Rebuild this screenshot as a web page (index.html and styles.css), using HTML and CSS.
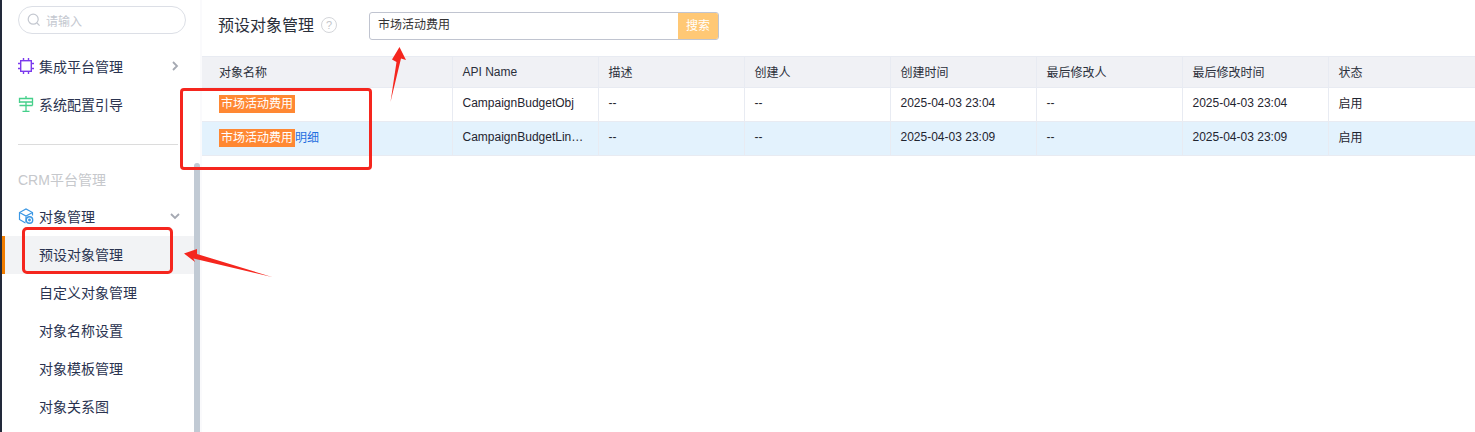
FILE: index.html
```html
<!DOCTYPE html>
<html lang="zh-CN">
<head>
<meta charset="utf-8">
<title>预设对象管理</title>
<link rel="stylesheet" href="styles.css">
</head>
<body>
<div class="page">
  <div class="rail"></div>
  <aside class="sidebar">
    <div class="search">
      <svg class="search-icon" viewBox="0 0 14 14"><circle cx="6.2" cy="6.2" r="5" /><path d="M10 10l2.6 2.6" /></svg>
      <span>请输入</span>
    </div>
    <div class="nav first">
      <svg class="icon" viewBox="0 0 16 16" fill="none" stroke="#7c3aed" stroke-width="1.4"><rect x="2.700" y="2.700" width="10.600" height="10.600"/><path d="M5.500 0v2.500M10.500 0v2.500M5.500 13.500v2.500M10.500 13.500v2.500M0 5.500h2.500M0 10.500h2.500M13.500 5.500h2.500M13.500 10.500h2.500"/></svg>
      <span class="label">集成平台管理</span>
      <svg class="chev" viewBox="0 0 10 10"><path d="M3 1l4 4-4 4"/></svg>
    </div>
    <div class="nav">
      <svg class="icon" viewBox="0 0 16 16" fill="none" stroke="#45d08a" stroke-width="1.3"><path d="M8 0v2.500M1.500 2.500h13v3.500H1.500zM14.500 6v3.500M1.500 6v1M1.500 9.500h13M8 6v10M4.500 15.500h7"/></svg>
      <span class="label">系统配置引导</span>
    </div>
    <div class="divider"></div>
    <div class="group">CRM平台管理</div>
    <div class="nav">
      <svg class="icon" viewBox="0 0 16 16" fill="none" stroke="#3a97e4" stroke-width="1.200"><path d="M14.500 7.500V4.500L8 1 1.500 4.500v7L7.500 15M1.500 4.500L8 8l6.500-3.500M8 8v6"/><circle cx="11.500" cy="12" r="3.200" stroke-width="1.400"/><circle cx="11.500" cy="12" r=".8" fill="#3a97e4"/></svg>
      <span class="label">对象管理</span>
      <svg class="chev" viewBox="0 0 10 10"><path d="M1 3l4 4 4-4"/></svg>
    </div>
    <div class="nav sub active"><span class="label">预设对象管理</span></div>
    <div class="nav sub"><span class="label">自定义对象管理</span></div>
    <div class="nav sub"><span class="label">对象名称设置</span></div>
    <div class="nav sub"><span class="label">对象模板管理</span></div>
    <div class="nav sub"><span class="label">对象关系图</span></div>
  </aside>
  <div class="track"><div class="thumb"></div></div>
  <main class="main">
    <header class="head">
      <h1 class="title">预设对象管理</h1>
      <span class="help">?</span>
      <div class="query">
        <span class="query-text">市场活动费用</span>
        <span class="query-btn">搜索</span>
      </div>
    </header>
    <table class="grid">
      <colgroup>
        <col class="c1"><col class="c2"><col class="c2"><col class="c2"><col class="c2"><col class="c2"><col class="c2"><col>
      </colgroup>
      <thead>
        <tr><th>对象名称</th><th>API Name</th><th>描述</th><th>创建人</th><th>创建时间</th><th>最后修改人</th><th>最后修改时间</th><th>状态</th></tr>
      </thead>
      <tbody>
        <tr>
          <td><mark class="hit">市场活动费用</mark></td>
          <td>CampaignBudgetObj</td><td>--</td><td>--</td><td>2025-04-03 23:04</td><td>--</td><td>2025-04-03 23:04</td><td>启用</td>
        </tr>
        <tr class="hover">
          <td><mark class="hit">市场活动费用</mark><span class="link">明细</span></td>
          <td>CampaignBudgetLin…</td><td>--</td><td>--</td><td>2025-04-03 23:09</td><td>--</td><td>2025-04-03 23:09</td><td>启用</td>
        </tr>
      </tbody>
    </table>
  </main>
</div>
<div class="box box-rows"></div>
<div class="box box-nav"></div>
<svg class="arrows" viewBox="0 0 1475 432">
  <path d="M390.500 102L396.500 62 392 59.500 399.500 47 406 60 401 58.500Z"/>
  <path d="M272 277L197 254 197 249 184 253.500 195 262 193.500 258.500Z"/>
</svg>
</body>
</html>
```
FILE: styles.css
```css
* { box-sizing: border-box; }
html, body { margin: 0; height: 100%; overflow: hidden; background: #fff; }
body {
  position: relative;
  font-family: "Liberation Sans", "Noto Sans CJK SC", sans-serif;
  font-size: 12px;
  color: #181f2e;
}
.page { display: flex; height: 432px; }
.rail { width: 2px; background: #22293a; flex: none; }
.sidebar { width: 192px; flex: none; padding-top: 6px; }
.search {
  margin-left: 16px;
  width: 168px;
  height: 28px;
  border: 1px solid #dcdfe6;
  border-radius: 14px;
  display: flex;
  align-items: center;
  padding-left: 8px;
  gap: 5px;
  color: #c4c8d0;
  font-size: 12px;
}
.search-icon { width: 14px; height: 14px; fill: none; stroke: #c4c8d0; stroke-width: 1.200; }
.nav {
  height: 38px;
  display: flex;
  align-items: center;
  padding: 0 14px 2px 16px;
  font-size: 14px;
  color: #2a3350;
}
.first { margin-top: 14px; }
.icon { width: 16px; height: 16px; margin-right: 5px; flex: none; }
.label { flex: 1; }
.chev { width: 10px; height: 10px; fill: none; stroke: #a5a9b2; stroke-width: 1.800; flex: none; }
.divider { height: 1px; background: #dcdcdc; margin: 20px 16px 0 16px; }
.group { height: 35px; margin-top: 18px; padding-left: 16px; line-height: 35px; font-size: 14px; color: #c6c8cc; }
.sub { padding-left: 37px; }
.active { background: #f2f3f5; border-left: 3px solid #f07c00; padding-left: 34px; }
.track { width: 8px; flex: none; padding-top: 163px; border-right: 2px solid #fafafc; }
.thumb { height: 100%; background: #c1cad4; border-radius: 3px 3px 0 0; }
.main { flex: 1; min-width: 0; }
.head { height: 56px; display: flex; align-items: center; padding-left: 16px; padding-bottom: 8px; }
.title { margin: 0; font-size: 16px; font-weight: 400; color: #2a2f3a; }
.help {
  width: 16px; height: 16px; margin: 2px 0 0 7px;
  border: 1px solid #d4d6da; border-radius: 50%;
  color: #c4c6ca; font-size: 11px; line-height: 14px; text-align: center;
}
.query {
  margin-left: 32px;
  margin-top: 4px;
  width: 350px;
  height: 28px;
  border: 1px solid #c0c4d0;
  border-radius: 3px;
  display: flex;
  align-items: stretch;
}
.query-text { flex: 1; padding-left: 8px; line-height: 25px; color: #333; }
.query-btn { width: 40px; background: #ffc875; color: #fff; text-align: center; line-height: 26px; border-radius: 0 2px 2px 0; }
.grid { width: 1273px; border-collapse: collapse; table-layout: fixed; }
.c1 { width: 250px; }
.c2 { width: 146px; }
.grid th, .grid td {
  border: 1px solid #e8ebf2;
  padding: 0 15px 0 10px;
  text-align: left;
  font-weight: 400;
  white-space: nowrap;
}
.grid th:first-child, .grid td:first-child { border-left: 0; padding-left: 17px; }
.grid th:last-child, .grid td:last-child { border-right: 0; }
.grid th { height: 31px; background: #f0f1f5; color: #2a2f3a; padding-bottom: 1px; }
.grid td { height: 34px; color: #1f2530; padding-bottom: 4px; }
.hover td { background: #e3f2fd; }
.hit { background: #ff8833; color: #fff; padding: 2px 2px; }
.link { color: #1f6fe0; }
.box { position: absolute; border: 3px solid #f5261e; border-radius: 4px; }
.box-rows { left: 180px; top: 88px; width: 192px; height: 82px; }
.box-nav { left: 22px; top: 227px; width: 151px; height: 47px; border-radius: 5px; }
.arrows { position: absolute; left: 0; top: 0; width: 1475px; height: 432px; pointer-events: none; }
.arrows path { fill: #f5261e; }
```
